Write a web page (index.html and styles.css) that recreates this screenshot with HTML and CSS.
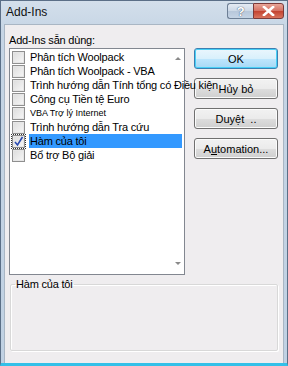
FILE: index.html
```html
<!doctype html>
<html lang="vi">

<head>
    <meta charset="utf-8" />
    <title>Add-Ins</title>
    <link rel="stylesheet" href="styles.css">
</head>

<body>
    <div class="window">
        <div class="titlebar">
            <span class="title">Add-Ins</span>
            <div class="caption-buttons">
                <div class="cap-btn help">?</div>
                <div class="cap-btn close">
                    <svg width="13" height="10" viewBox="0 0 13 10">
                        <path d="M2 1 L11 9 M11 1 L2 9" stroke="#fff" stroke-width="2.6" stroke-linecap="square" />
                    </svg>
                </div>
            </div>
        </div>

        <div class="client">
            <div class="label">Add-Ins sẵn dùng:</div>

            <div class="main">
                <div class="listbox">
                    <div class="items">
                        <div class="item"><span class="check"></span><span class="text">Phân tích Woolpack</span></div>
                        <div class="item"><span class="check"></span><span class="text">Phân tích Woolpack - VBA</span></div>
                        <div class="item"><span class="check"></span><span class="text overflow">Trình hướng dẫn Tính tổng có Điều kiện</span></div>
                        <div class="item"><span class="check"></span><span class="text">Công cụ Tiền tệ Euro</span></div>
                        <div class="item"><span class="check"></span><span class="text small">VBA Trợ lý Internet</span></div>
                        <div class="item"><span class="check"></span><span class="text">Trình hướng dẫn Tra cứu</span></div>
                        <div class="item selected"><span class="check checked focus">
                            <svg width="11" height="11" viewBox="0 0 11 11">
                                <path d="M2 6 L4.5 9 L9.5 1" fill="none" stroke="#2a4ab0" stroke-width="1.6" />
                            </svg>
                        </span><span class="text">Hàm của tôi</span></div>
                        <div class="item"><span class="check"></span><span class="text">Bổ trợ Bộ giải</span></div>
                    </div>
                    <div class="scroll">
                        <span class="arrow up"></span>
                        <span class="arrow down"></span>
                    </div>
                </div>

                <div class="buttons">
                    <button class="btn default">OK</button>
                    <button class="btn">Hủy bỏ</button>
                    <button class="btn">Duyệt&nbsp; ..</button>
                    <button class="btn">A<u>u</u>tomation...</button>
                </div>
            </div>

            <fieldset class="group">
                <legend>Hàm của tôi</legend>
            </fieldset>
        </div>
    </div>
</body>

</html>
```

FILE: styles.css
```css
html, body {
    margin: 0;
    padding: 0;
}

body {
    width: 288px;
    height: 366px;
    font-family: "Liberation Sans", Arial, sans-serif;
    font-size: 11px;
    letter-spacing: -0.2px;
    color: #000;
}

.window {
    width: 288px;
    height: 366px;
    box-sizing: border-box;
    display: flex;
    flex-direction: column;
    background: linear-gradient(#d3dfeb, #c6d5e5 30px, #c0d1e3);
    border: 1px solid #5b6f87;
    border-bottom: 3px solid #33c0e8;
}

.titlebar {
    height: 23px;
    display: flex;
    align-items: flex-start;
    justify-content: space-between;
}

.title {
    margin: 4px 0 0 5px;
    font-size: 12px;
    letter-spacing: 0;
    color: #111;
}

.caption-buttons {
    display: flex;
    margin: 2px 3px 0 0;
}

.cap-btn {
    height: 14px;
    border: 1px solid #6d7f95;
    display: flex;
    align-items: center;
    justify-content: center;
}

.cap-btn.help {
    width: 25px;
    border-radius: 3px 0 0 3px;
    background: linear-gradient(#e4ebf3, #ccd8e6 50%, #b7c7da 51%, #c5d4e5);
    color: #fff;
    font-weight: bold;
    font-size: 13px;
    text-shadow: 0 0 1px #4d5f78, 0 0 1px #4d5f78;
    border-right: none;
}

.cap-btn.close {
    width: 29px;
    border-radius: 0 3px 3px 0;
    border-color: #7a3a3a;
    background: linear-gradient(#e8a598, #d47062 50%, #c34230 51%, #d8735d);
}

.client {
    flex: 1;
    margin: 0 3px;
    background: #efedef;
    border: 1px solid #a9b6c4;
    border-bottom: none;
    padding: 8px 0 0 4px;
    display: flex;
    flex-direction: column;
}

.label {
    height: 14px;
    line-height: 14px;
}

.main {
    display: flex;
    margin-top: 1px;
}

.listbox {
    width: 174px;
    height: 225px;
    border: 1px solid #828790;
    background: #fff;
    display: flex;
}

.items {
    flex: 1;
    min-width: 0;
    display: flex;
    flex-direction: column;
    padding-top: 1px;
}

.item {
    height: 14px;
    display: flex;
    align-items: center;
    white-space: nowrap;
}

.check {
    width: 11px;
    height: 11px;
    margin: 0 4px 0 2px;
    border: 1px solid #8f8f8f;
    background: linear-gradient(135deg, #dcdcdc, #f7f7f7);
    box-shadow: inset 0 0 0 1px #e6e6e6;
    display: flex;
    align-items: center;
    justify-content: center;
    flex-shrink: 0;
}

.check.focus {
    outline: 1px dotted #333;
    outline-offset: 0;
}

.text {
    height: 14px;
    line-height: 14px;
    padding-left: 1px;
}

.text.small {
    font-size: 9px;
    letter-spacing: 0;
}

.text.overflow {
    position: relative;
    z-index: 2;
}

.item.selected .text {
    background: #3399ff;
    flex: 1;
    margin-right: -10px;
}

.scroll {
    width: 12px;
    flex-shrink: 0;
    display: flex;
    flex-direction: column;
    justify-content: space-between;
    align-items: center;
    padding: 8px 0 9px;
}

.arrow {
    width: 0;
    height: 0;
    border-left: 3px solid transparent;
    border-right: 3px solid transparent;
}

.arrow.up {
    border-bottom: 3px solid #8a8a8a;
}

.arrow.down {
    border-top: 3px solid #8a8a8a;
}

.buttons {
    display: flex;
    flex-direction: column;
    gap: 9px;
    margin-left: 9px;
}

.btn {
    width: 84px;
    height: 21px;
    padding: 0;
    font-family: "Liberation Sans", Arial, sans-serif;
    font-size: 11px;
    color: #000;
    border: 1px solid #707070;
    border-radius: 3px;
    background: linear-gradient(#f2f2f2, #ebebeb 50%, #dddddd 51%, #cfcfcf);
    box-shadow: inset 0 0 0 1px #fbfbfb;
}

.btn.default {
    border-color: #3c7fb1;
    box-shadow: inset 0 0 0 1px #48d0f7;
    background: linear-gradient(#eaf6fd, #d9f0fc 50%, #bee6fd 51%, #a7d9f5);
}

.group {
    margin: 3px 0 0 1px;
    width: 268px;
    height: 73px;
    border: 1px solid #d8d8d8;
    box-shadow: 1px 1px 0 #fff, inset 1px 1px 0 #fff;
    border-radius: 2px;
    padding: 0;
    box-sizing: border-box;
}

.group legend {
    margin-left: 4px;
    padding: 0 1px;
    font-size: 11px;
    line-height: 12px;
}
```
